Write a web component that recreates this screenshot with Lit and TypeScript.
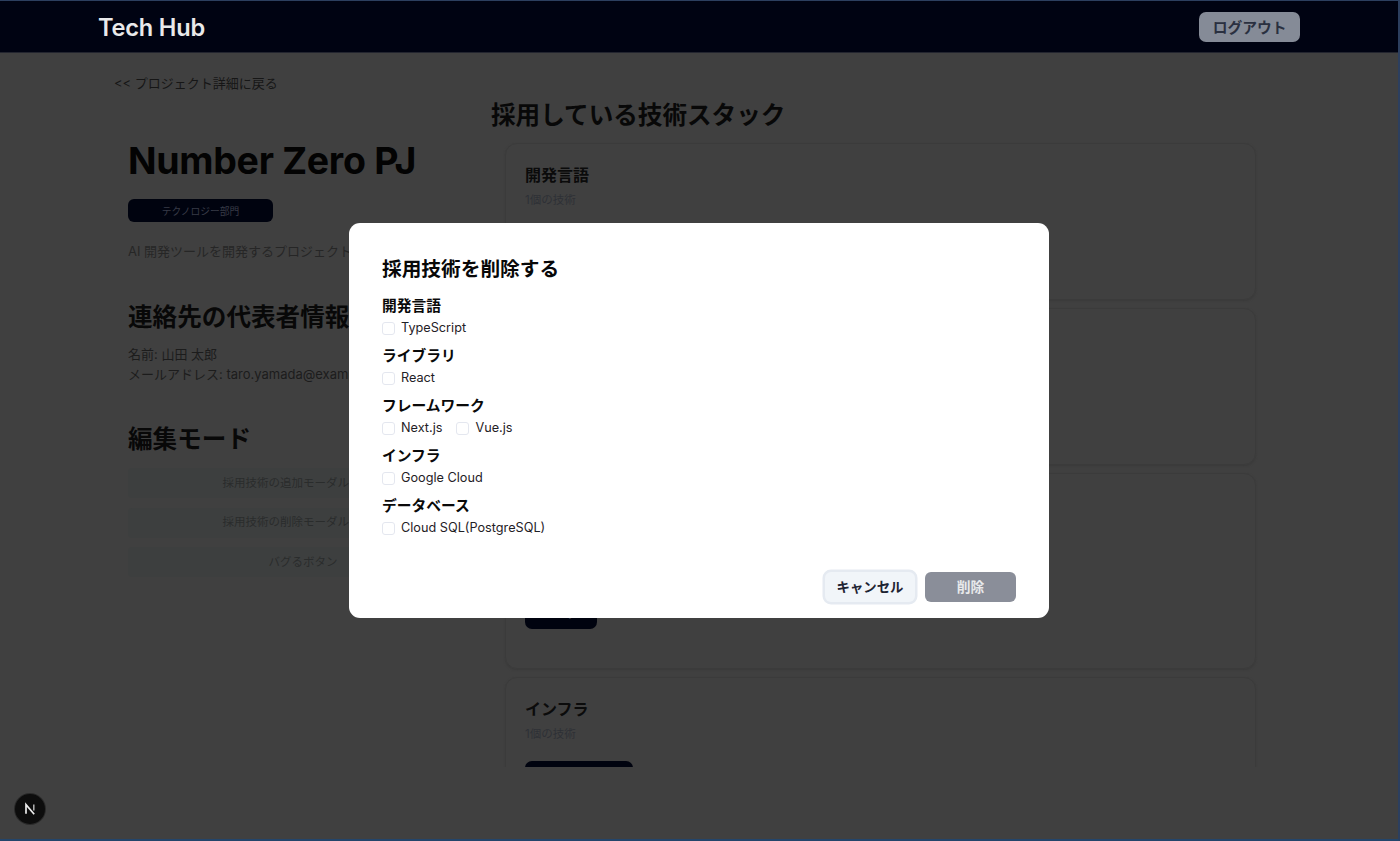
import { LitElement, html, css } from "lit";
import { customElement } from "lit/decorators.js";

const stack = [
  { name: "開発言語", count: "1個の技術", chips: [["TypeScript", 100]] },
  { name: "ライブラリ", count: "1個の技術", chips: [["React", 72]] },
  { name: "フレームワーク", count: "2個の技術", chips: [["Next.js", 72], ["Vue.js", 72]] },
  { name: "インフラ", count: "1個の技術", chips: [["Google Cloud", 108]] },
  { name: "データベース", count: "1個の技術", chips: [["Cloud SQL(PostgreSQL)", 170]] },
];

const options = [
  { name: "開発言語", items: ["TypeScript"] },
  { name: "ライブラリ", items: ["React"] },
  { name: "フレームワーク", items: ["Next.js", "Vue.js"] },
  { name: "インフラ", items: ["Google Cloud"] },
  { name: "データベース", items: ["Cloud SQL(PostgreSQL)"] },
];

@customElement("app-root")
export class AppRoot extends LitElement {
  static styles = css`
    :host {
      display: block;
      font-family: Inter, "Noto Sans CJK JP", sans-serif;
    }
    * { box-sizing: border-box; }
    h1, h2, h3, p { margin: 0; }
    .page {
      position: relative;
      height: 841px;
      overflow: hidden;
      background: #404040;
      border-top: 1px solid #2c3f5f;
      border-right: 2px solid #2c3f5f;
      border-bottom: 2px solid #23456b;
      color: #111;
    }
    .header {
      height: 52px;
      background: #000312;
      border-bottom: 1px solid #23252f;
      display: flex;
      align-items: center;
      justify-content: space-between;
      padding: 1px 98px 0 98px;
    }
    .brand { font-size: 23.6px; font-weight: 600; color: #e9e9ea; letter-spacing: -0.2px; }
    .logout {
      width: 101px;
      height: 30px;
      padding-bottom: 1px;
      border-radius: 7px;
      background: #858b97;
      color: #2a3040;
      font-size: 14.75px;
      font-weight: 600;
      display: flex;
      align-items: center;
      justify-content: center;
    }
    .main {
      display: flex;
      padding: 20px 0 0 114px;
    }
    .left { width: 377px; flex: none; }
    .back { font-size: 13px; line-height: 20px; color: #161616; }
    .info { padding: 0 0 0 14px; }
    h1 {
      margin-top: 46px;
      font-size: 37.5px;
      line-height: 44px;
      font-weight: 700;
      color: #030303;
      letter-spacing: -0.3px;
    }
    .badge {
      margin-top: 16px;
      width: 145px;
      height: 23px;
      border-radius: 6px;
      background: #00030f;
      color: #383b47;
      font-size: 9.75px;
      display: flex;
      align-items: center;
      justify-content: center;
    }
    .desc { margin-top: 19px; font-size: 13px; line-height: 20px; color: #262626; white-space: nowrap; }
    h2 { font-size: 24.6px; line-height: 32px; font-weight: 600; color: #080808; white-space: nowrap; }
    .contact-title { margin-top: 40px; }
    .contact { margin-top: 11px; font-size: 13px; line-height: 20px; color: #1c1c1c; white-space: nowrap; }
    .mode-title { margin-top: 39px; }
    .actions { margin-top: 13px; display: flex; flex-direction: column; gap: 9.5px; width: 350px; }
    .action {
      height: 30px;
      padding-bottom: 3px;
      border-radius: 4px;
      background: #3d3f3f;
      color: #2a2c2c;
      font-size: 11.5px;
      display: flex;
      align-items: center;
      justify-content: center;
    }
    .right {
      margin-top: 26px;
      width: 780px;
      height: 668px;
      overflow: hidden;
    }
    .cards {
      margin-top: 12px;
      padding-left: 14px;
      display: flex;
      flex-direction: column;
      gap: 8px;
      width: 765px;
    }
    .card {
      border: 1px solid #3b3b3b;
      border-radius: 12px;
      padding: 21px 19px 39px;
      box-shadow: 0 1px 2px #393939;
    }
    .card h3 { font-size: 16px; line-height: 20px; font-weight: 600; color: #0b0b0b; }
    .count { margin-top: 5px; font-size: 11.5px; line-height: 20px; color: #2e3036; }
    .chips { margin-top: 17px; display: flex; flex-direction: column; align-items: flex-start; gap: 6px; }
    .chip {
      height: 33px;
      border-radius: 7px;
      background: #00030f;
      color: #383b47;
      font-size: 12px;
      display: flex;
      align-items: center;
      justify-content: center;
    }
    .next {
      position: absolute;
      left: 15px;
      bottom: 15px;
      width: 30px;
      height: 30px;
      border-radius: 50%;
      background: #0d0d0d;
      box-shadow: 0 0 0 1px #2a2a2a;
      display: flex;
      align-items: center;
      justify-content: center;
    }
    .layer {
      position: absolute;
      inset: -1px 0 0 0;
      height: 841px;
      display: flex;
      align-items: center;
      justify-content: center;
    }
    .modal {
      width: 700px;
      height: 395px;
      background: #fff;
      border-radius: 11px;
      padding: 32px 33px 16px;
      color: #0a0a0a;
      display: flex;
      flex-direction: column;
    }
    .modal h2 { font-size: 19.7px; line-height: 28px; font-weight: 600; }
    .groups { margin-top: 13.4px; display: flex; flex-direction: column; gap: 8px; }
    .group-name { font-size: 14.75px; line-height: 20px; font-weight: 600; color: #0a0a0a; }
    .row { margin-top: 2px; display: flex; gap: 14px; }
    .opt { display: flex; align-items: center; gap: 6px; font-size: 12.7px; line-height: 20px; color: #1f2126; }
    .box {
      width: 13px;
      height: 13px;
      border: 1px solid #e4e7ef;
      border-radius: 3px;
      background: #fff;
    }
    .footer { margin-top: auto; display: flex; justify-content: flex-end; align-items: center; gap: 10px; }
    .btn {
      height: 30px;
      padding-bottom: 3px;
      border-radius: 6px;
      font-size: 13.75px;
      font-weight: 600;
      display: flex;
      align-items: center;
      justify-content: center;
    }
    .cancel {
      width: 90px;
      font-size: 13.4px;
      background: #f1f5f9;
      color: #1e2433;
      box-shadow: 0 0 0 2.5px #e5eaf1;
    }
    .delete { width: 91px; background: #8a8e99; color: #e8e9eb; }
  `;

  render() {
    return html`
      <div class="page">
        <header class="header">
          <div class="brand">Tech Hub</div>
          <div class="logout">ログアウト</div>
        </header>
        <main class="main">
          <section class="left">
            <div class="back">&lt;&lt; プロジェクト詳細に戻る</div>
            <div class="info">
              <h1>Number Zero PJ</h1>
              <div class="badge">テクノロジー部門</div>
              <p class="desc">AI 開発ツールを開発するプロジェクトです。</p>
              <h2 class="contact-title">連絡先の代表者情報</h2>
              <div class="contact">
                名前: 山田 太郎<br />
                メールアドレス: taro.yamada@example.com
              </div>
              <h2 class="mode-title">編集モード</h2>
              <div class="actions">
                <div class="action">採用技術の追加モーダルを開く</div>
                <div class="action">採用技術の削除モーダルを開く</div>
                <div class="action">バグるボタン</div>
              </div>
            </div>
          </section>
          <section class="right">
            <h2>採用している技術スタック</h2>
            <div class="cards">
              ${stack.map(
                (s) => html`
                  <article class="card">
                    <h3>${s.name}</h3>
                    <p class="count">${s.count}</p>
                    <div class="chips">
                      ${s.chips.map(
                        ([label, w]) => html`<div class="chip" style="width:${w}px">${label}</div>`
                      )}
                    </div>
                  </article>
                `
              )}
            </div>
          </section>
        </main>
        <div class="next">
          <svg width="14" height="14" viewBox="0 0 14 14" fill="none">
            <path d="M3 11.8V2.6L11.2 12.2" stroke="#ececec" stroke-width="1.7" />
            <path d="M10.8 2.4V8.6" stroke="#b5b5b5" stroke-width="1.5" />
          </svg>
        </div>
        <div class="layer">
          <div class="modal">
            <h2>採用技術を削除する</h2>
            <div class="groups">
              ${options.map(
                (g) => html`
                  <div>
                    <div class="group-name">${g.name}</div>
                    <div class="row">
                      ${g.items.map(
                        (i) => html`<label class="opt"><span class="box"></span>${i}</label>`
                      )}
                    </div>
                  </div>
                `
              )}
            </div>
            <div class="footer">
              <div class="btn cancel">キャンセル</div>
              <div class="btn delete">削除</div>
            </div>
          </div>
        </div>
      </div>
    `;
  }
}
